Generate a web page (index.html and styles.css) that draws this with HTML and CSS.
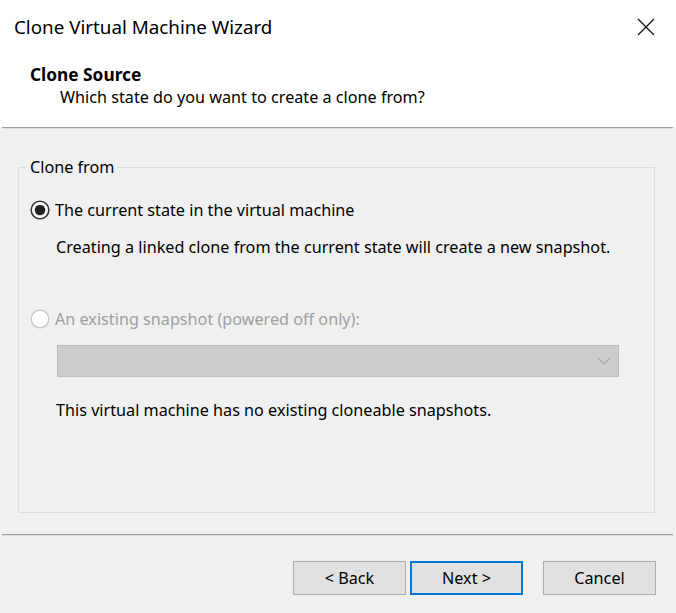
FILE: index.html
```html
<!DOCTYPE html>
<html lang="en">
<head>
  <meta charset="UTF-8" />
  <title>Clone Virtual Machine Wizard</title>
  <link rel="stylesheet" href="styles.css">
</head>
<body>
  <div class="dialog">
    <div class="header">
      <div class="title-bar">
        <span class="title">Clone Virtual Machine Wizard</span>
        <svg class="close" width="18" height="18" viewBox="0 0 18 18">
          <path d="M1 1 L17 17 M17 1 L1 17" stroke="#111" stroke-width="1.2" fill="none" />
        </svg>
      </div>
      <div class="page-title">Clone Source</div>
      <div class="page-subtitle">Which state do you want to create a clone from?</div>
    </div>
    <div class="divider"></div>

    <div class="content">
      <fieldset class="group">
        <legend>Clone from</legend>

        <label class="radio-row">
          <svg class="radio" width="20" height="20" viewBox="0 0 20 20">
            <circle cx="10" cy="10" r="8.8" fill="#fff" stroke="#333" stroke-width="1.6" />
            <circle cx="10" cy="10" r="5.3" fill="#222" />
          </svg>
          <span>The current state in the virtual machine</span>
        </label>
        <p class="note">Creating a linked clone from the current state will create a new snapshot.</p>

        <label class="radio-row disabled">
          <svg class="radio" width="20" height="20" viewBox="0 0 20 20">
            <circle cx="10" cy="10" r="8.8" fill="#fff" stroke="#c8c8c8" stroke-width="1.4" />
          </svg>
          <span>An existing snapshot (powered off only):</span>
        </label>

        <div class="select disabled">
          <svg class="chevron" width="14" height="8" viewBox="0 0 14 8">
            <path d="M1 1 L7 7 L13 1" stroke="#a8a8a8" stroke-width="1.1" fill="none" />
          </svg>
        </div>

        <p class="note">This virtual machine has no existing cloneable snapshots.</p>
      </fieldset>
    </div>

    <div class="divider"></div>
    <div class="buttons">
      <button class="btn back">&lt; Back</button>
      <button class="btn next">Next &gt;</button>
      <button class="btn cancel">Cancel</button>
    </div>
  </div>
</body>
</html>
```

FILE: styles.css
```css
body {
  margin: 0;
  background: #fff;
  font-family: "Noto Sans", "Open Sans", sans-serif;
  font-size: 16.2px;
  color: #000;
}

.dialog {
  width: 676px;
  height: 613px;
  background: #f0f0f0;
  display: flex;
  flex-direction: column;
}

.header {
  height: 127px;
  background: #fff;
  box-sizing: border-box;
}

.title-bar {
  height: 54px;
  display: flex;
  justify-content: space-between;
  align-items: center;
  padding: 0 21px 0 14px;
}

.title {
  font-size: 18.8px;
}

.page-title {
  margin-top: 10px;
  padding-left: 30px;
  font-size: 17.3px;
  font-weight: bold;
  line-height: 22px;
}

.page-subtitle {
  padding-left: 60px;
  line-height: 22px;
}

.divider {
  height: 1px;
  border-top: 1px solid #a0a0a0;
  background: #dcdcdc;
  margin-left: 2px;
  margin-right: 3px;
}

.content {
  flex: 1;
  display: flex;
  padding: 28px 21px 21px 18px;
}

.group {
  flex: 1;
  margin: 0;
  padding: 0 11px;
  border: 1px solid #dcdcdc;
  display: flex;
  flex-direction: column;
  align-items: flex-start;
}

.group legend {
  padding: 0 3px;
  margin-left: -3px;
  line-height: 20px;
}

.radio-row {
  display: flex;
  align-items: center;
  gap: 5px;
  height: 22px;
  margin-top: 22px;
}

.radio-row.disabled {
  color: #a0a0a0;
  margin-top: 50px;
}

.note {
  margin: 15px 0 0 26px;
  line-height: 22px;
}

.select {
  box-sizing: border-box;
  width: 562px;
  height: 32px;
  margin: 15px 0 0 27px;
  background: #cccccc;
  border: 1px solid #bfbfbf;
  display: flex;
  align-items: center;
  justify-content: flex-end;
  padding-right: 7px;
}

.select + .note {
  margin-top: 22px;
}

.buttons {
  display: flex;
  justify-content: flex-end;
  padding: 25px 20px 0 0;
  height: 52px;
}

.btn {
  box-sizing: border-box;
  width: 113px;
  height: 34px;
  background: #e1e1e1;
  border: 1px solid #adadad;
  font-family: inherit;
  font-size: 16.2px;
  color: #000;
  padding: 0;
}

.btn.next {
  margin-left: 4px;
  border: 2px solid #0078d7;
}

.btn.cancel {
  margin-left: 20px;
}
```
